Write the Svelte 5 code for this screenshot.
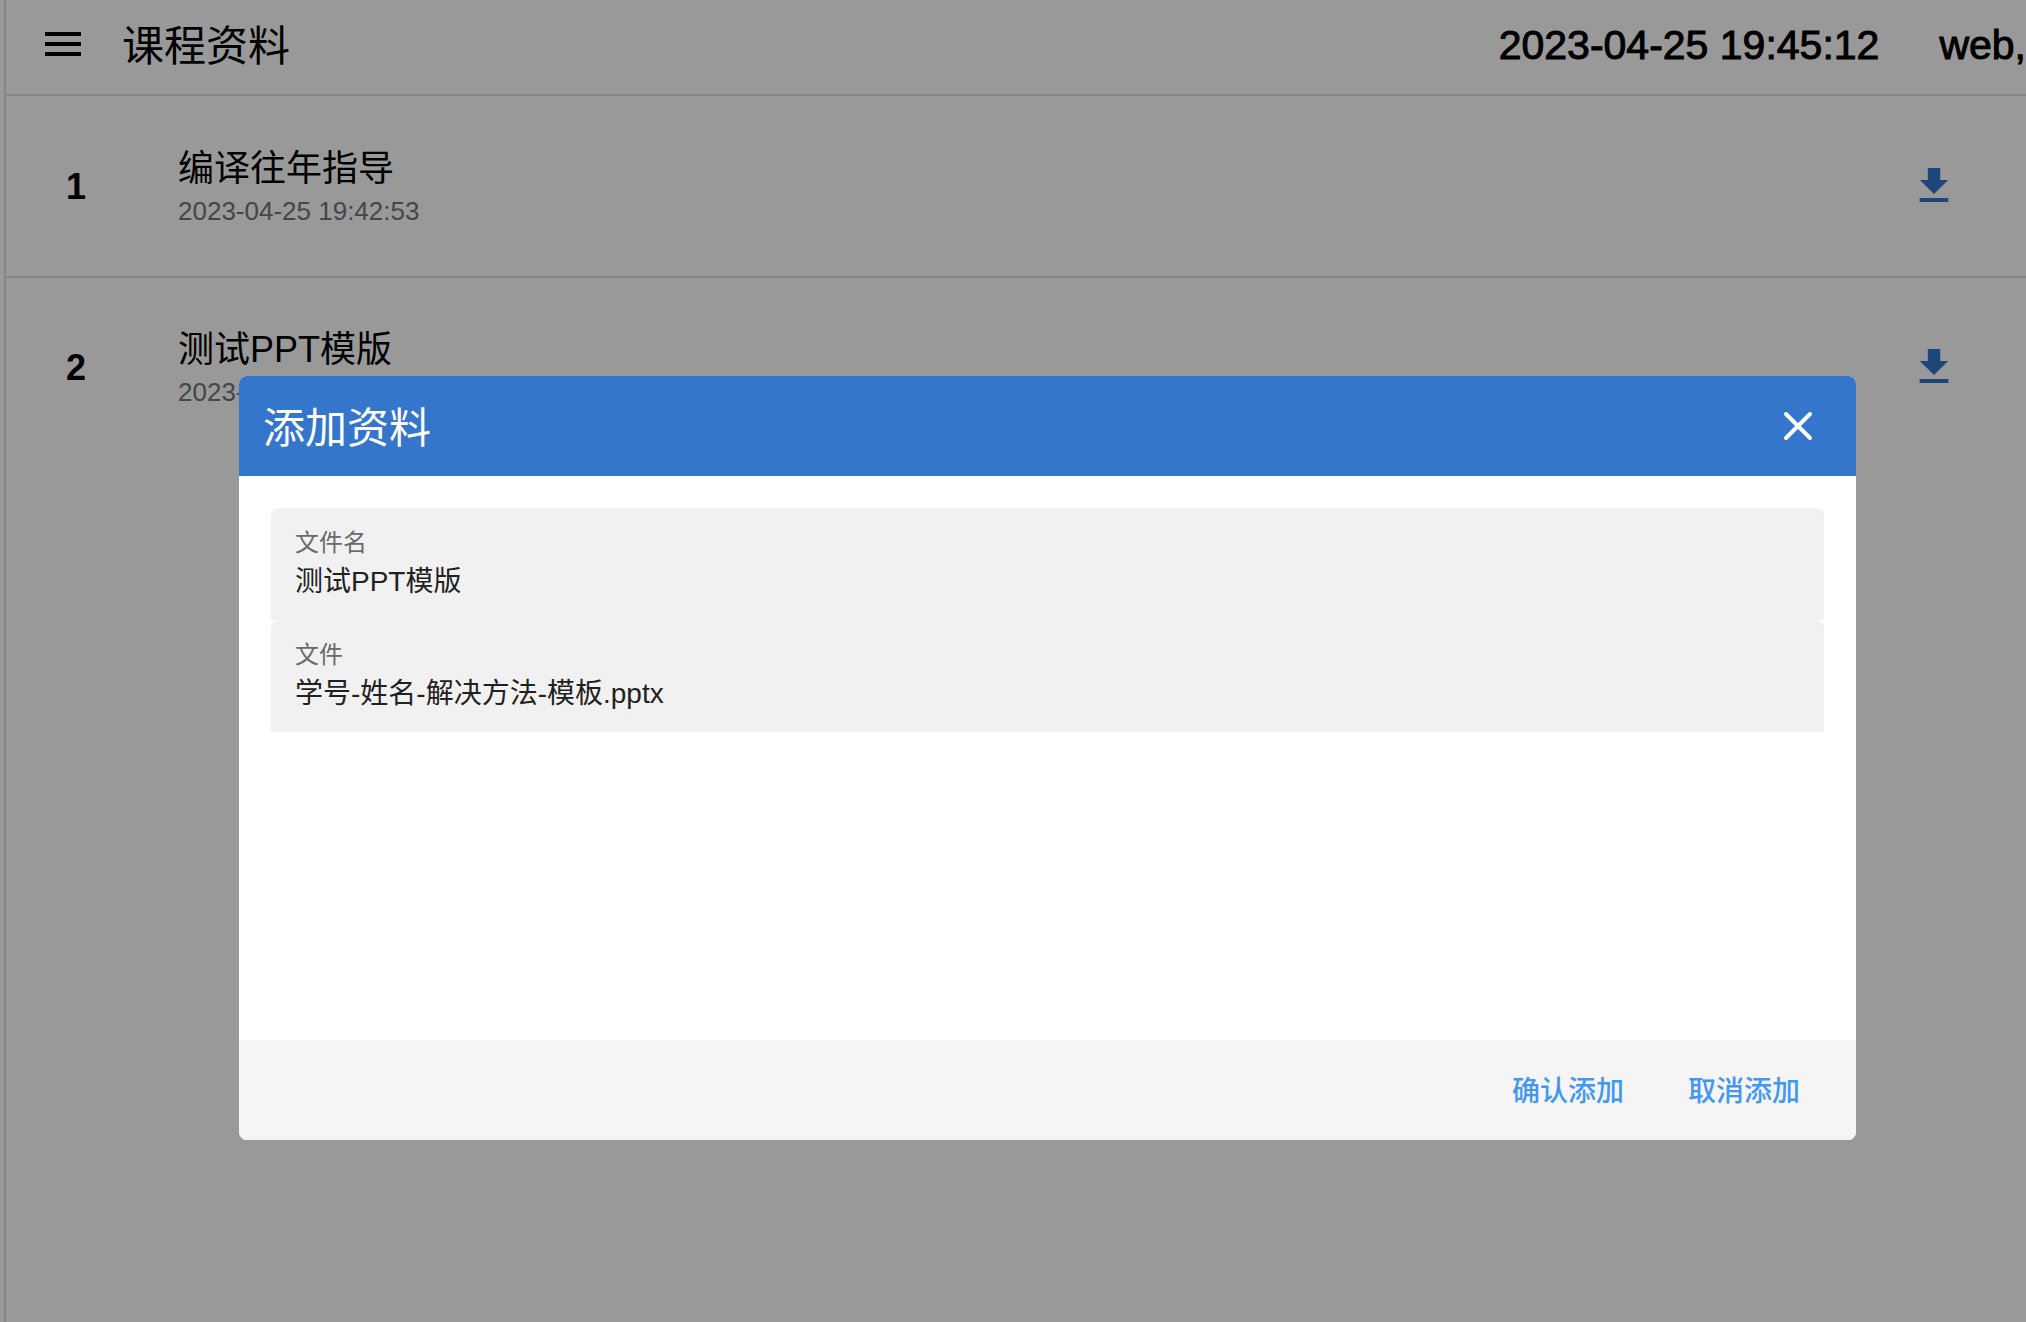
<script>
  let clock = $state('2023-04-25 19:45:12');
  let user = $state('web,');
  let showDialog = $state(true);
  let fileName = $state('测试PPT模版');
  let file = $state('学号-姓名-解决方法-模板.pptx');

  const materials = [
    { name: '编译往年指导', time: '2023-04-25 19:42:53' },
    { name: '测试PPT模版', time: '2023-04-25 19:43:36' }
  ];

  function close() {
    showDialog = false;
  }
</script>

<div class="page">
  <main>
    <header class="toolbar">
      <button class="icon-btn" aria-label="菜单">
        <svg viewBox="0 0 24 24" width="48" height="48" fill="currentColor">
          <path d="M3 18h18v-2H3v2zm0-5h18v-2H3v2zm0-7v2h18V6H3z" />
        </svg>
      </button>
      <h1>课程资料</h1>
      <span class="clock">{clock}</span>
      <span class="user">{user}</span>
    </header>

    <ul class="list">
      {#each materials as item, i}
        <li class="row">
          <span class="index">{i + 1}</span>
          <div class="info">
            <span class="name">{item.name}</span>
            <span class="time">{item.time}</span>
          </div>
          <button class="icon-btn download" aria-label="下载">
            <svg viewBox="0 0 24 24" width="48" height="48" fill="currentColor">
              <path d="M19.1 9h-4V3H8.9v6H4.9l7.1 7 7.1-7zM4.8 18v2h14.4v-2H4.8z" />
            </svg>
          </button>
        </li>
      {/each}
    </ul>
  </main>

  {#if showDialog}
    <div class="backdrop">
      <div class="dialog" role="dialog" aria-modal="true" aria-labelledby="dialog-title">
        <div class="dialog-head">
          <h2 id="dialog-title">添加资料</h2>
          <button class="icon-btn" aria-label="关闭" onclick={close}>
            <svg viewBox="0 0 36 36" width="36" height="36" fill="none" stroke="currentColor" stroke-width="4">
              <path d="M6 6L30 30M30 6L6 30" stroke-linecap="round" />
            </svg>
          </button>
        </div>

        <div class="dialog-body">
          <div class="field">
            <label for="file-name">文件名</label>
            <input id="file-name" type="text" bind:value={fileName} />
          </div>
          <div class="field">
            <label for="file">文件</label>
            <input id="file" type="text" readonly value={file} />
          </div>
        </div>

        <div class="dialog-actions">
          <button onclick={close}>确认添加</button>
          <button onclick={close}>取消添加</button>
        </div>
      </div>
    </div>
  {/if}
</div>

<style>
  .page {
    position: relative;
    min-height: 100vh;
    display: flex;
    box-sizing: border-box;
    padding-left: 4px;
    overflow: hidden;
    background: #fff;
    color: #000;
    font-family: "Liberation Sans", "Noto Sans CJK SC", sans-serif;
  }

  button,
  input {
    margin: 0;
    padding: 0;
    border: none;
    background: none;
    font-family: inherit;
    color: inherit;
  }

  button {
    cursor: pointer;
  }

  main {
    flex: 1;
    min-width: 0;
    border-left: 2px solid #e0e0e0;
  }

  .icon-btn {
    display: flex;
    flex-shrink: 0;
  }

  .toolbar {
    display: flex;
    align-items: center;
    height: 88px;
    padding: 0 0 6px 33px;
    border-bottom: 2px solid #e0e0e0;
    white-space: nowrap;
  }

  .toolbar h1,
  .dialog-head h2 {
    margin: 0;
    padding-bottom: 4px;
    font-size: 42px;
    font-weight: 400;
  }

  .toolbar h1 {
    flex: 1;
    margin-left: 35px;
  }

  .clock,
  .user {
    padding-top: 3px;
    font-size: 41px;
    /* halfway between regular and bold */
    -webkit-text-stroke: 1px currentColor;
  }

  .user {
    margin-left: 60px;
  }

  .list {
    margin: 0;
    padding: 0;
    list-style: none;
  }

  .row {
    display: flex;
    align-items: center;
    height: 180px;
    box-sizing: border-box;
    padding: 0 68px 0 60px;
  }

  .row + .row {
    border-top: 2px solid #e0e0e0;
  }

  .index {
    width: 112px;
    padding-top: 2px;
    font-size: 36px;
    font-weight: 700;
  }

  .info {
    flex: 1;
    display: flex;
    flex-direction: column;
    padding-top: 6px;
  }

  .name {
    font-size: 36px;
    line-height: 44px;
  }

  .time {
    font-size: 26px;
    line-height: 40px;
    color: #757575;
  }

  .download {
    color: #3376cb;
  }

  .backdrop {
    position: absolute;
    inset: 0;
    display: flex;
    align-items: flex-start;
    padding: 376px 170px 0 239px;
    background: rgba(0, 0, 0, .4);
  }

  .dialog {
    flex: 1;
    border-radius: 8px;
    overflow: hidden;
    background: #fff;
  }

  .dialog-head {
    display: flex;
    align-items: center;
    justify-content: space-between;
    height: 100px;
    padding: 0 40px 0 24px;
    background: #3376cb;
    color: #fff;
  }

  .dialog-body {
    min-height: 500px;
    padding: 32px;
  }

  .field {
    display: flex;
    flex-direction: column;
    height: 94px;
    padding: 18px 24px 0;
    border-radius: 8px 8px 0 0;
    background: #f1f1f1;
  }

  .field label {
    font-size: 24px;
    line-height: 34px;
    color: #6a6a6a;
  }

  .field input {
    height: 38px;
    font-size: 28px;
    color: #212121;
    outline: none;
  }

  .dialog-actions {
    display: flex;
    align-items: center;
    justify-content: flex-end;
    height: 100px;
    padding: 0 24px;
    background: #f5f5f5;
  }

  .dialog-actions button {
    height: 72px;
    padding: 0 32px 2px;
    font-size: 28px;
    font-weight: 500;
    color: #4298f0;
  }
</style>
